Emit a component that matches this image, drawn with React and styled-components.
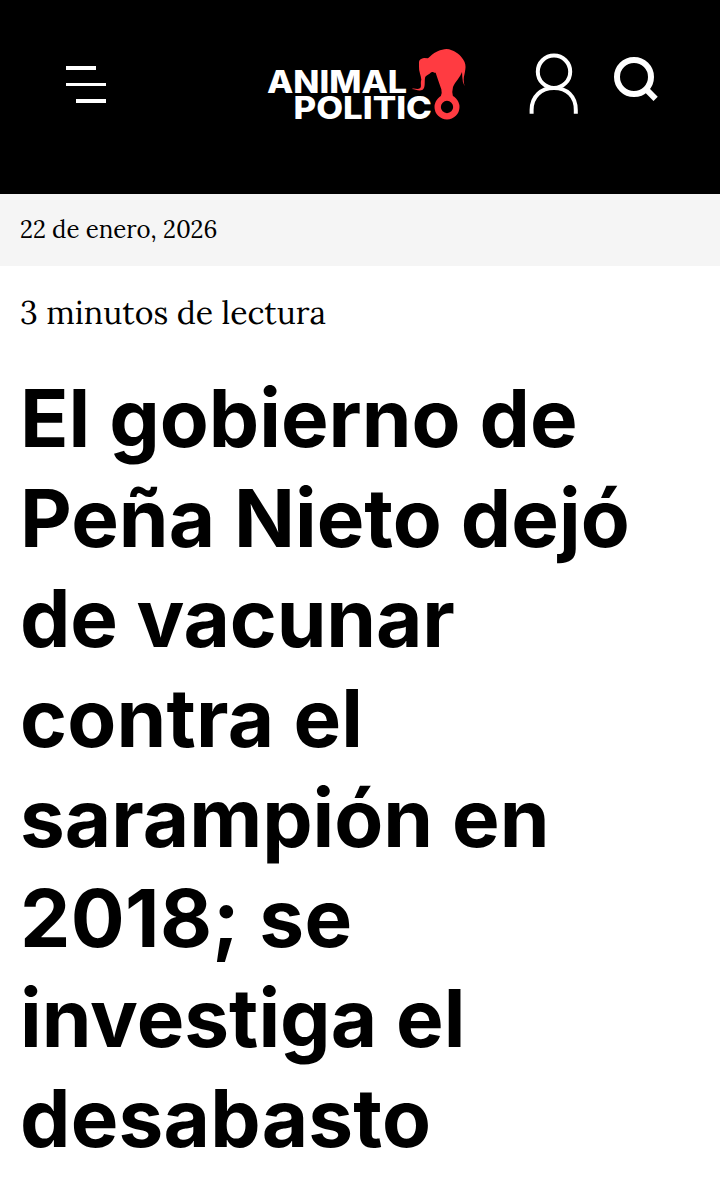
import styled, { createGlobalStyle } from "styled-components"

const titleLines = [
    { text: "El gobierno de", tracking: 0 },
    { text: "Peña Nieto dejó", tracking: 0 },
    { text: "de vacunar", tracking: -0.17 },
    { text: "contra el", tracking: 0.2 },
    { text: "sarampión en", tracking: 0 },
    { text: "2018; se", tracking: 0.35 },
    { text: "investiga el", tracking: 0 },
    { text: "desabasto", tracking: 0.22 },
]

function App(){

    return(
    <>
        <GlobalStyle />
        <Header>
            <MenuButton aria-label="Menú">
                <MenuLine $width={30} />
                <MenuLine $width={40} />
                <MenuLine $width={30} $end />
            </MenuButton>
            <Logo />
            <Actions>
                <UserIcon />
                <SearchIcon />
            </Actions>
        </Header>
        <DateBar>22 de enero, 2026</DateBar>
        <Article>
            <ReadingTime>3 minutos de lectura</ReadingTime>
            <Title>
                {titleLines.map( line => (
                    <TitleLine key={line.text} $tracking={line.tracking}>{line.text}</TitleLine>
                ))}
            </Title>
        </Article>
    </>
    )
}

function Logo(){
    return(
    <LogoSvg viewBox="260 40 220 90" role="img" aria-label="Animal Político">
        <LogoText x="267" y="93.2" textLength="140" lengthAdjust="spacingAndGlyphs">ANIMAL</LogoText>
        <LogoText x="293.5" y="118.8" textLength="138.5" lengthAdjust="spacingAndGlyphs">POLITIC</LogoText>
        <g transform="translate(400 40) scale(0.33333)" fill="#ff3b41">
            <path d="M36 147 C44 143 51 151 60 145 C66 139 60 129 64 119 C63 105 56 94 57 80 L57 66 C58 58 64 55 72 54 L84 55 C92 49 100 39 113 34 C129 27 142 24 155 31 C166 34 181 45 190 59 C196 68 198 78 196 88 C195 100 191 109 191 119 Q191 130 194 139 Q187 128 187 112 L186 96 C181 111 166 125 159 141 Q155 154 159 170 L122 170 Q127 158 124 148 C119 133 113 117 107 98 C102 99 97 92 91 99 C85 105 77 105 75 114 C73 126 77 142 68 149 C58 155 46 148 36 147 Z" />
            <circle cx="141" cy="201" r="28" fill="none" stroke="#ff3b41" strokeWidth="19" />
        </g>
    </LogoSvg>
    )
}

function UserIcon(){
    return(
    <UserSvg viewBox="0 0 50 62">
        <circle cx="25" cy="18.7" r="16.2" />
        <path d="M2.6 60.7 V57 C2.6 43.5 12 35 25 35 S46.8 43.5 46.8 57 V60.7" />
    </UserSvg>
    )
}

function SearchIcon(){
    return(
    <SearchSvg viewBox="0 0 46 46">
        <circle cx="21" cy="21" r="17" />
        <path d="M33 33.2 L42.6 42.8" />
    </SearchSvg>
    )
}

const GlobalStyle = createGlobalStyle`
    body {
        margin: 0;
        background-color: #fff;
        color: #000;
        overflow: hidden;
    }
`

const Header = styled.header`
    display: flex;
    align-items: flex-start;
    justify-content: space-between;
    box-sizing: border-box;
    height: 194px;
    padding: 40px 61px 0 66px;
    background-color: #000;
`

const MenuButton = styled.button`
    display: flex;
    flex-direction: column;
    gap: 13px;
    width: 40px;
    margin: 26px 0 0;
    padding: 0;
    border: 0;
    background: none;
    cursor: pointer;
`

const MenuLine = styled.span`
    width: ${props => props.$width}px;
    height: 3.5px;
    align-self: ${props => props.$end ? "flex-end" : "flex-start"};
    background-color: #fff;
`

const LogoSvg = styled.svg`
    width: 220px;
    height: 90px;
    margin-left: 105px;
`

const LogoText = styled.text`
    font-family: Inter, sans-serif;
    font-size: 31px;
    font-weight: 800;
    fill: #fff;
`

const Actions = styled.div`
    display: flex;
    align-items: flex-start;
    gap: 34px;
    margin-top: 13px;
`

const UserSvg = styled.svg`
    width: 50px;
    height: 62px;
    fill: none;
    stroke: #fff;
    stroke-width: 4;
`

const SearchSvg = styled.svg`
    width: 46px;
    height: 46px;
    margin-top: 3px;
    fill: none;
    stroke: #fff;
    stroke-width: 6;
`

const DateBar = styled.div`
    box-sizing: border-box;
    height: 72px;
    padding: 20px;
    background-color: #f5f5f5;
    font-family: Lora, "Liberation Serif", serif;
    font-size: 24px;
    line-height: 32px;
`

const Article = styled.article`
    padding: 27px 20px 0;
`

const ReadingTime = styled.div`
    font-family: Lora, "Liberation Serif", serif;
    font-size: 32px;
    line-height: 40px;
`

const Title = styled.h1`
    margin: 35px 0 0;
    font-family: Inter, sans-serif;
    font-size: 80px;
    font-weight: 700;
    line-height: 100px;
`

const TitleLine = styled.span`
    display: block;
    letter-spacing: ${props => props.$tracking}px;
`

export default App;
